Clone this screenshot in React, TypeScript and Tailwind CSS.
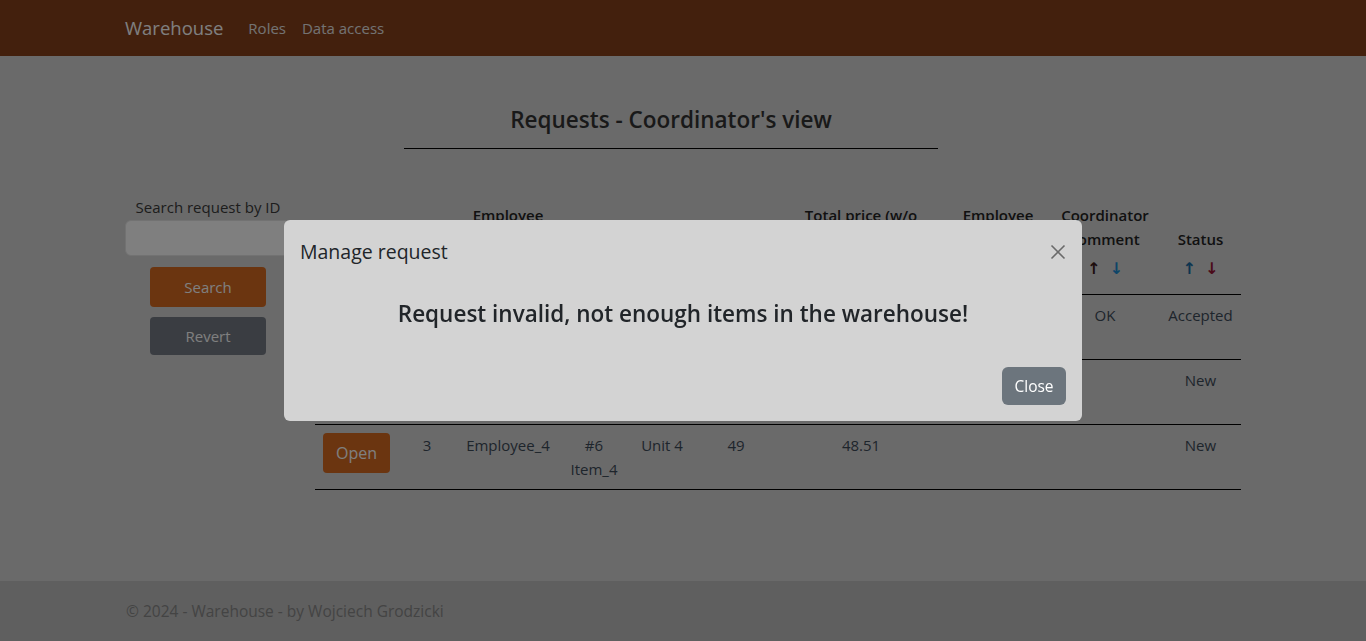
import React from "react";

const font = { fontFamily: '"Open Sans", "Noto Sans", sans-serif' };

type Col = { w: string; lines: string[] };

const cols: Col[] = [
  { w: "w-[83px]", lines: [] },
  { w: "w-[58px]", lines: ["ID"] },
  { w: "w-[104px]", lines: ["Employee", "name"] },
  { w: "w-[68px]", lines: ["Item"] },
  { w: "w-[68px]", lines: ["Unit"] },
  { w: "w-[80px]", lines: ["Quantity"] },
  { w: "w-[170px]", lines: ["Total price (w/o", "VAT)"] },
  { w: "w-[104px]", lines: ["Employee", "comment"] },
  { w: "w-[110px]", lines: ["Coordinator", "comment"] },
  { w: "w-[81px]", lines: ["Status"] },
];

type Row = {
  id: string;
  emp: string;
  item: [string, string];
  unit: string;
  qty: string;
  price: string;
  ec: string;
  cc: string;
  status: string;
};

const rows: Row[] = [
  { id: "1", emp: "Employee_2", item: ["#3", "Item_1"], unit: "Unit 1", qty: "12", price: "120.00", ec: "", cc: "OK", status: "Accepted" },
  { id: "2", emp: "Employee_3", item: ["#5", "Item_3"], unit: "Unit 2", qty: "5", price: "24.75", ec: "", cc: "", status: "New" },
  { id: "3", emp: "Employee_4", item: ["#6", "Item_4"], unit: "Unit 4", qty: "49", price: "48.51", ec: "", cc: "", status: "New" },
];

function Arrows({ i }: { i: number }) {
  const up = i === 8 ? "text-[#3a1a1a]" : "text-[#1a6aa0]";
  const down = i === 8 ? "text-[#1a8ad0]" : "text-[#961432]";
  return (
    <div
      className="h-[35px] flex items-center justify-center gap-[9px] text-[16px]"
      style={{ fontFamily: '"DejaVu Sans", sans-serif' }}
    >
      <span className={up}>↑</span>
      <span className={down}>↓</span>
    </div>
  );
}

export default function App() {
  return (
    <div className="min-h-screen flex flex-col bg-[#d4d4d4]" style={font}>
      {/* navbar */}
      <nav className="h-14 bg-[#86401a] shrink-0">
        <div className="w-[1140px] mx-auto px-3 h-full flex items-center">
          <span className="text-[18.5px] text-white mr-[17px] leading-none">Warehouse</span>
          <span className="text-[15px] text-[#e6e6e6] px-2 leading-none">Roles</span>
          <span className="text-[15px] text-[#e6e6e6] px-2 leading-none">Data access</span>
        </div>
      </nav>

      {/* main */}
      <main className="flex-1">
        <div className="w-[1140px] mx-auto px-3">
          <div className="ml-[279px] w-[534px] pt-[49px]">
            <h1 className="text-center text-[22.5px] font-semibold leading-[29px] text-[#333333]">
              Requests - Coordinator's view
            </h1>
            <div className="mt-[14px] h-px bg-black" />
          </div>

          <div className="flex mt-[46px] gap-6">
            {/* left */}
            <div className="w-[166px] shrink-0 flex flex-col items-center">
              <div className="text-[15px] leading-6 text-[#3a3a3a]">Search request by ID</div>
              <div className="mt-px w-full h-9 bg-white rounded-md border border-[#e4e4e4]" />
              <button className="mt-[11px] w-[116px] h-10 rounded-[4px] bg-[#d66a20] text-white text-[15px]">
                Search
              </button>
              <button className="mt-[10px] w-[116px] h-[38px] rounded-[4px] bg-[#747a84] text-white text-[15px]">
                Revert
              </button>
            </div>

            {/* table */}
            <table className="w-[926px] table-fixed border-collapse text-[15px]">
              <colgroup>
                {cols.map((c, i) => (
                  <col key={i} className={c.w} />
                ))}
              </colgroup>
              <thead>
                <tr className="border-b border-black">
                  {cols.map((c, i) => (
                    <th
                      key={i}
                      className="align-bottom text-center font-semibold text-[#222222] pt-2 pb-2 px-1 leading-6"
                    >
                      {c.lines.map((l, j) => (
                        <div key={j} className="whitespace-nowrap">
                          {l}
                        </div>
                      ))}
                      {i > 0 && <Arrows i={i} />}
                    </th>
                  ))}
                </tr>
              </thead>
              <tbody className="text-[#3d4a58]">
                {rows.map((r, i) => (
                  <tr key={i} className="border-b border-black h-[65px]">
                    <td className="align-top pt-2 px-2">
                      <button className="w-[67px] h-10 rounded-[4px] bg-[#d66a20] text-white text-[16px]">
                        Open
                      </button>
                    </td>
                    <td className="align-top text-center pt-2 leading-6">{r.id}</td>
                    <td className="align-top text-center pt-2 leading-6">{r.emp}</td>
                    <td className="align-top text-center pt-2 leading-6">
                      <div>{r.item[0]}</div>
                      <div>{r.item[1]}</div>
                    </td>
                    <td className="align-top text-center pt-2 leading-6">{r.unit}</td>
                    <td className="align-top text-center pt-2 leading-6">{r.qty}</td>
                    <td className="align-top text-center pt-2 leading-6">{r.price}</td>
                    <td className="align-top text-center pt-2 leading-6">{r.ec}</td>
                    <td className="align-top text-center pt-2 leading-6">{r.cc}</td>
                    <td className="align-top text-center pt-2 leading-6">{r.status}</td>
                  </tr>
                ))}
              </tbody>
            </table>
          </div>
        </div>
      </main>

      {/* footer */}
      <footer className="h-[60px] shrink-0 bg-[#bebebe]">
        <div className="w-[1140px] mx-auto px-3 h-full flex items-center pt-px">
          <span className="text-[15.5px] text-[#888888] ml-px">© 2024 - Warehouse - by Wojciech Grodzicki</span>
        </div>
      </footer>

      {/* backdrop + modal */}
      <div className="fixed inset-0 bg-black/50 flex items-center justify-center">
        <div className="w-[798px] h-[201px] bg-[#d3d3d3] rounded-md flex flex-col">
          <div className="h-[63px] px-4 flex items-center justify-between">
            <div className="text-[19.5px] leading-[30px] text-[#212529] pt-px">Manage request</div>
            <svg width="16" height="16" viewBox="0 0 16 16">
              <path d="M1.5 1.5 L14.5 14.5 M14.5 1.5 L1.5 14.5" stroke="#6a6a6a" strokeWidth="1.6" />
            </svg>
          </div>
          <div className="px-4 pt-4 h-[70px]">
            <div className="text-center text-[22.5px] font-semibold leading-[29px] text-[#212529]">
              Request invalid, not enough items in the warehouse!
            </div>
          </div>
          <div className="flex-1 flex justify-end items-start px-4 pt-[14px]">
            <button className="w-16 h-[38px] rounded-md bg-[#6c757d] text-white text-[15.5px] pt-px">Close</button>
          </div>
        </div>
      </div>
    </div>
  );
}
